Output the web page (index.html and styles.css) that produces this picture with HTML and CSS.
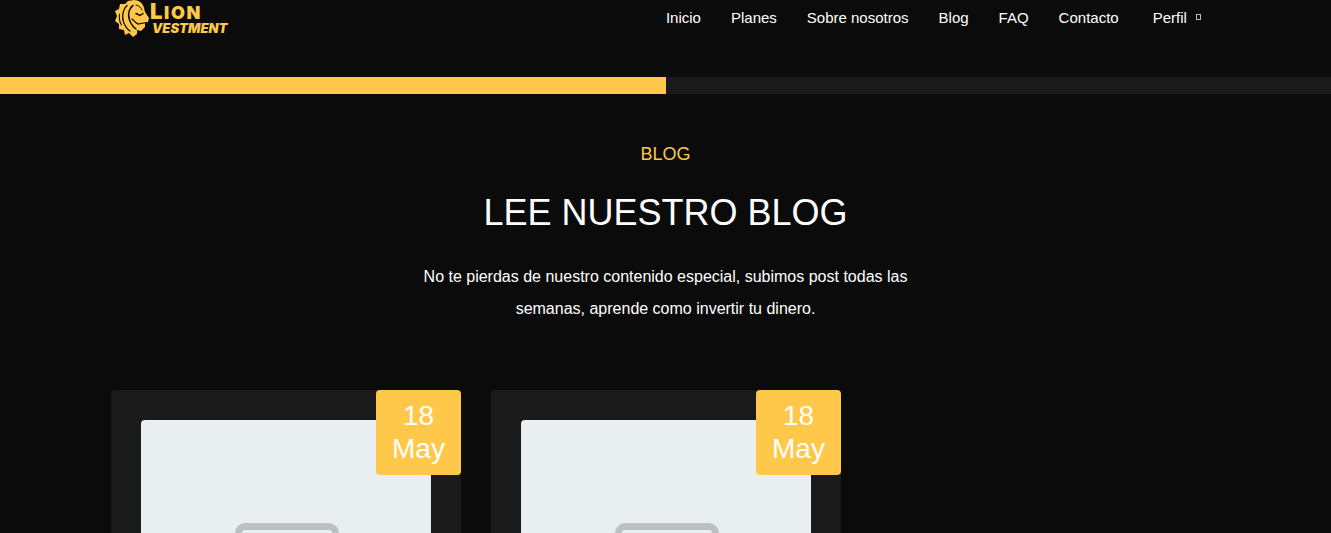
FILE: index.html
```html
<!DOCTYPE html>
<html lang="es">

<head>
    <meta charset="UTF-8">
    <meta name="viewport" content="width=device-width, initial-scale=1.0">
    <title>Blog</title>
    <link rel="stylesheet" href="styles.css">
</head>

<body>
    <header class="header">
        <a class="logo" href="#">
            <svg class="logo-mark" viewBox="0 0 34 37" xmlns="http://www.w3.org/2000/svg">
                <path d="M19 0C24 0 28 3 29 8L30 12L34 18L33 22L30 23L30 27L26 31L22 30L22 34L18 37L14 33L10 35L9 30L4 29L4 24L0 21L2 16L0 11L4 9L5 4L10 4L13 1Z" fill="#ffc84b" />
                <g fill="none" stroke="#0b0b0b" stroke-linecap="round">
                    <path d="M18 5.500C14 8 12.500 14 14.500 20C16 24 18 27 21 29" stroke-width="1.500" />
                    <path d="M12 5.500C8 9 6.500 16 8.500 22C10 26 12 29 15 31" stroke-width="1.300" />
                    <path d="M4.500 14C4 18 4.500 22 6.500 25" stroke-width="1.100" />
                    <path d="M21 13.500L25 15.500L28 13.500" stroke-width="1.500" />
                    <path d="M17 19C19 21 21 23 23 24L31 22.500" stroke-width="1.200" />
                    <path d="M21 5C24 5.500 26 7.500 27 10" stroke-width="1" />
                </g>
            </svg>
            <span class="logo-text">
                <span class="logo-top">Lion</span>
                <span class="logo-bottom">Vestment</span>
            </span>
        </a>
        <nav class="nav">
            <a href="#">Inicio</a>
            <a href="#">Planes</a>
            <a href="#">Sobre nosotros</a>
            <a href="#">Blog</a>
            <a href="#">FAQ</a>
            <a href="#">Contacto</a>
            <a class="nav-profile" href="#">Perfil <i class="tofu"></i></a>
        </nav>
    </header>

    <div class="progress">
        <div class="progress-bar" style="width: 50%"></div>
    </div>

    <main class="blog">
        <div class="blog-head">
            <span class="blog-label">BLOG</span>
            <h1>LEE NUESTRO BLOG</h1>
            <p>No te pierdas de nuestro contenido especial, subimos post todas las semanas, aprende como invertir tu dinero.</p>
        </div>

        <div class="cards">
            <article class="card">
                <div class="card-date">18<br>May</div>
                <div class="card-img">
                    <div class="placeholder"></div>
                </div>
            </article>
            <article class="card">
                <div class="card-date">18<br>May</div>
                <div class="card-img">
                    <div class="placeholder"></div>
                </div>
            </article>
        </div>
    </main>
</body>

</html>
```

FILE: styles.css
```css
* {
    box-sizing: border-box;
    font-family: "Liberation Sans", Arial, sans-serif;
}

html,
body {
    height: 533px;
    overflow: hidden;
}

body {
    margin: 0;
    background-color: #0b0b0b;
    color: white;
}

a {
    color: white;
    text-decoration: none;
}

.header {
    display: flex;
    justify-content: space-between;
    height: 77px;
    padding: 0 130px 0 115px;
}

.logo {
    display: flex;
    align-items: flex-start;
}

.logo-mark {
    width: 34px;
    height: 37px;
}

.logo-text {
    display: flex;
    flex-direction: column;
    margin-left: 1px;
    color: #ffc84b;
    font-weight: 900;
    text-transform: uppercase;
}

.logo-top {
    margin-top: 1px;
    font-family: Inter, sans-serif;
    font-size: 18px;
    line-height: 21px;
    letter-spacing: 1.6px;
}

.logo-top::first-letter {
    font-size: 22px;
}

.logo-bottom {
    margin-left: 2px;
    font-family: Inter, sans-serif;
    font-size: 13px;
    line-height: 11px;
    font-style: italic;
}

.nav {
    display: flex;
    gap: 30px;
    padding-top: 9px;
    font-size: 15px;
    line-height: 17px;
}

.nav-profile {
    margin-left: 4px;
}

.tofu {
    display: inline-block;
    width: 5px;
    height: 6px;
    margin-left: 5px;
    border: 1px solid #bbb;
    vertical-align: 3px;
}

.progress {
    height: 17px;
    background-color: #1a1a1a;
}

.progress-bar {
    height: 100%;
    background-color: #ffc84b;
}

.blog {
    padding-top: 50px;
}

.blog-head {
    width: 510px;
    margin: 0 auto;
    text-align: center;
}

.blog-label {
    display: block;
    color: #ffc84b;
    font-size: 18px;
    line-height: 20px;
}

.blog-head h1 {
    margin: 27px 0 0;
    font-size: 36px;
    font-weight: normal;
    line-height: 44px;
}

.blog-head p {
    margin: 26px 0 0;
    font-size: 16px;
    line-height: 32px;
}

.cards {
    display: flex;
    gap: 30px;
    margin-top: 65px;
    padding-left: 111px;
}

.card {
    position: relative;
    width: 350px;
    padding: 30px;
    border-radius: 4px;
    background-color: #1a1a1a;
}

.card-date {
    position: absolute;
    top: 0;
    right: 0;
    width: 85px;
    height: 85px;
    padding-top: 9px;
    border-radius: 4px;
    background-color: #ffc84b;
    font-size: 28px;
    line-height: 33px;
    text-align: center;
}

.card-img {
    height: 290px;
    padding: 103px 0 0 94px;
    border-radius: 4px;
    background-color: #e9eef1;
}

.placeholder {
    width: 104px;
    height: 80px;
    border: 7px solid #bcc0c2;
    border-radius: 10px;
}
```
